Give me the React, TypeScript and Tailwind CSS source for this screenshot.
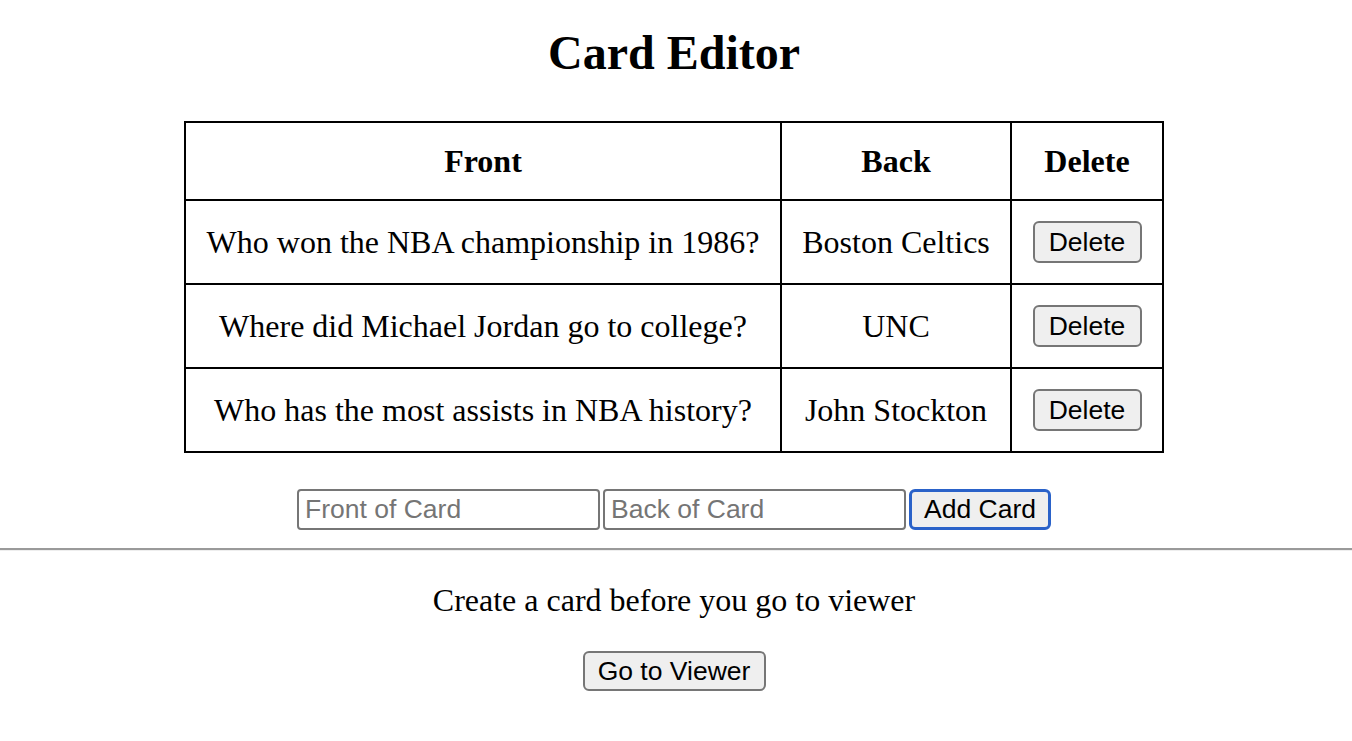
import { useState } from "react";

type Card = { front: string; back: string };

const initialCards: Card[] = [
  { front: "Who won the NBA championship in 1986?", back: "Boston Celtics" },
  { front: "Where did Michael Jordan go to college?", back: "UNC" },
  { front: "Who has the most assists in NBA history?", back: "John Stockton" },
];

const btn =
  "bg-[#efefef] border-2 border-[#767676] rounded-[6px] text-black font-['Liberation_Sans',Arial,sans-serif] text-[26.5px] leading-none flex items-center justify-center";

export default function App() {
  const [cards, setCards] = useState<Card[]>(initialCards);
  const [front, setFront] = useState("");
  const [back, setBack] = useState("");

  const addCard = () => {
    if (!front.trim() || !back.trim()) return;
    setCards([...cards, { front, back }]);
    setFront("");
    setBack("");
  };

  return (
    <div className="min-h-screen bg-white text-black font-['Liberation_Serif','Times_New_Roman',serif]">
      <div className="flex flex-col items-center pr-[4px]">
        <h1 className="mt-[26px] text-[48px] font-bold leading-[53px]">Card Editor</h1>

        <table className="mt-[42px] border-collapse table-fixed text-[32px] leading-[36px]">
          <colgroup>
            <col className="w-[596px]" />
            <col className="w-[230px]" />
            <col className="w-[152px]" />
          </colgroup>
          <thead>
            <tr>
              <th className="border-2 border-black p-[20px] font-bold">Front</th>
              <th className="border-2 border-black p-[20px] font-bold">Back</th>
              <th className="border-2 border-black p-[20px] font-bold">Delete</th>
            </tr>
          </thead>
          <tbody>
            {cards.map((c, i) => (
              <tr key={i}>
                <td className="border-2 border-black p-[20px] text-center">{c.front}</td>
                <td className="border-2 border-black p-[20px] text-center">{c.back}</td>
                <td className="border-2 border-black p-[20px]">
                  <button
                    className={`${btn} w-[109px] h-[42px] mx-auto`}
                    onClick={() => setCards(cards.filter((_, j) => j !== i))}
                  >
                    Delete
                  </button>
                </td>
              </tr>
            ))}
          </tbody>
        </table>

        <div className="mt-[36px] flex items-center gap-[3px]">
          <input
            value={front}
            onChange={(e) => setFront(e.target.value)}
            placeholder="Front of Card"
            className="w-[303px] h-[41px] border-2 border-[#767676] rounded-[4px] px-[6px] text-[26.5px] font-['Liberation_Sans',Arial,sans-serif] placeholder:text-[#757575] outline-none"
          />
          <input
            value={back}
            onChange={(e) => setBack(e.target.value)}
            placeholder="Back of Card"
            className="w-[303px] h-[41px] border-2 border-[#767676] rounded-[4px] px-[6px] text-[26.5px] font-['Liberation_Sans',Arial,sans-serif] placeholder:text-[#757575] outline-none"
          />
          <button
            onClick={addCard}
            className="bg-[#efefef] border-[3px] border-[#2a62c9] rounded-[6px] text-black font-['Liberation_Sans',Arial,sans-serif] text-[26.5px] leading-none flex items-center justify-center w-[142px] h-[41px]"
          >
            Add Card
          </button>
        </div>
      </div>

      <div className="mt-[18px] border-t-2 border-[#9a9a9a] border-b border-b-[#eeeeee] h-[3px]" />

      <div className="flex flex-col items-center pr-[4px]">
        <p className="mt-[31px] text-[32px] leading-[36.8px]">Create a card before you go to viewer</p>
        <button className={`${btn} mt-[32px] w-[183px] h-[40px]`}>Go to Viewer</button>
      </div>
    </div>
  );
}
